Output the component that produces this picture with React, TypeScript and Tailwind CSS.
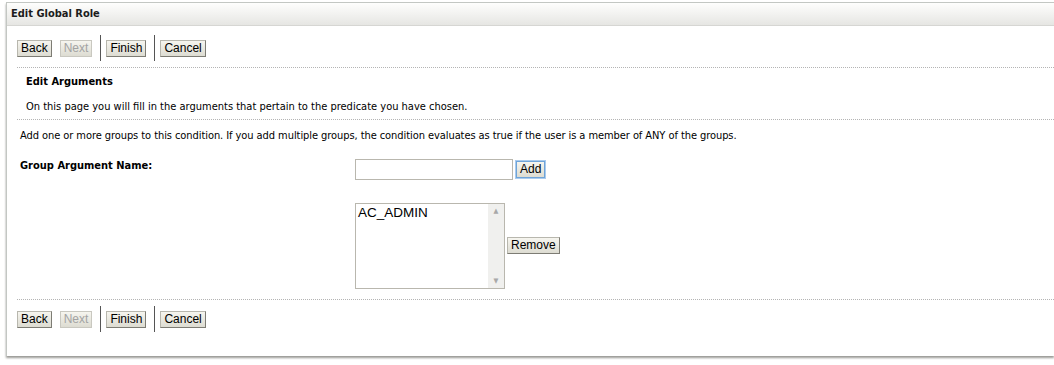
import React from "react";

const tahoma = { fontFamily: '"DejaVu Sans Condensed", "DejaVu Sans", Tahoma, sans-serif' };

interface BtnProps {
  label: string;
  disabled?: boolean;
  focused?: boolean;
}

function Btn({ label, disabled, focused }: BtnProps) {
  return (
    <button
      disabled={disabled}
      className={
        "h-[17px] px-[3px] text-[12px] leading-[15px] border bg-gradient-to-b from-[#f6f5ef] to-[#dddcd2] " +
        (disabled
          ? "text-[#a3a3a3] border-[#c9c8c0]"
          : focused
          ? "text-black border-[#6fa4d8] shadow-[0_0_0_1px_#a9cbee]"
          : "text-black border-t-[#b8b7ae] border-l-[#b8b7ae] border-r-[#7d7c74] border-b-[#7d7c74]")
      }
      style={{ fontFamily: '"Liberation Sans", Arial, sans-serif' }}
    >
      {label}
    </button>
  );
}

function Sep() {
  return <div className="w-px h-[26px] bg-[#555] ml-[4px] mr-[5px]" />;
}

function ButtonBar() {
  return (
    <div className="flex items-center h-[26px]">
      <Btn label="Back" />
      <div className="w-[8px]" />
      <Btn label="Next" disabled />
      <div className="w-[4px]" />
      <Sep />
      <Btn label="Finish" />
      <div className="w-[4px]" />
      <Sep />
      <Btn label="Cancel" />
    </div>
  );
}

function Dotted() {
  return <div className="border-t border-dotted border-[#b4b4b4]" />;
}

export default function App() {
  return (
    <div className="w-full h-[365px] bg-white pl-[6px] pt-[2px]" style={tahoma}>
      <div className="h-[354px] border-l border-t border-[#c3c7c3] bg-white shadow-[0_2px_2px_#9a9a96] flex flex-col">
        <div className="h-[23px] bg-gradient-to-b from-[#fefefd] to-[#e6e6e3] border-b border-[#d6d6d3] pl-[4px] flex items-center">
          <span className="text-[11px] font-bold text-[#1c1c1c]">Edit Global Role</span>
        </div>

        <div className="pl-[10px] pt-[9px]">
          <ButtonBar />
          <div className="mt-[6px]">
            <Dotted />
          </div>
          <div className="pl-[9px] pt-[6px] text-[11px] text-black">
            <div className="font-bold h-[15px] leading-[15px]">Edit Arguments</div>
            <div className="h-[15px] leading-[15px] mt-[10px]">
              On this page you will fill in the arguments that pertain to the predicate you have chosen.
            </div>
          </div>
          <div className="mt-[5px]">
            <Dotted />
          </div>
        </div>

        <div className="pl-[13px] text-[11px] text-black">
          <div className="h-[15px] leading-[15px] mt-[8px] tracking-[-0.07px]">
            Add one or more groups to this condition. If you add multiple groups, the condition evaluates as true if the user is a member of ANY of the groups.
          </div>

          <div className="flex mt-[16px]">
            <div className="w-[335px] font-bold leading-[15px] -mt-[1px]">Group Argument Name:</div>
            <div className="flex flex-col">
              <div className="flex items-end">
                <input
                  className="w-[158px] h-[21px] border border-[#b9b7ae] outline-none bg-white"
                  defaultValue=""
                />
                <div className="ml-[3px] mb-[2px]">
                  <Btn label="Add" focused />
                </div>
              </div>
              <div className="flex items-center mt-[23px]">
                <div className="w-[150px] h-[86px] border border-[#b9b7ae] flex bg-white">
                  <div
                    className="flex-1 text-[13.5px] leading-[16px] pl-[2px] pt-[1px] text-black"
                    style={{ fontFamily: '"Liberation Sans", Arial, sans-serif' }}
                  >
                    AC_ADMIN
                  </div>
                  <div className="w-[16px] bg-[#f0f0ee] flex flex-col justify-between items-center py-[3px] text-[7px] text-[#a8a8a8] leading-[8px]">
                    <span>▲</span>
                    <span>▼</span>
                  </div>
                </div>
                <div className="ml-[2px]">
                  <Btn label="Remove" />
                </div>
              </div>
            </div>
          </div>
        </div>

        <div className="pl-[10px] mt-[10px]">
          <Dotted />
          <div className="mt-[6px]">
            <ButtonBar />
          </div>
        </div>
      </div>
    </div>
  );
}
